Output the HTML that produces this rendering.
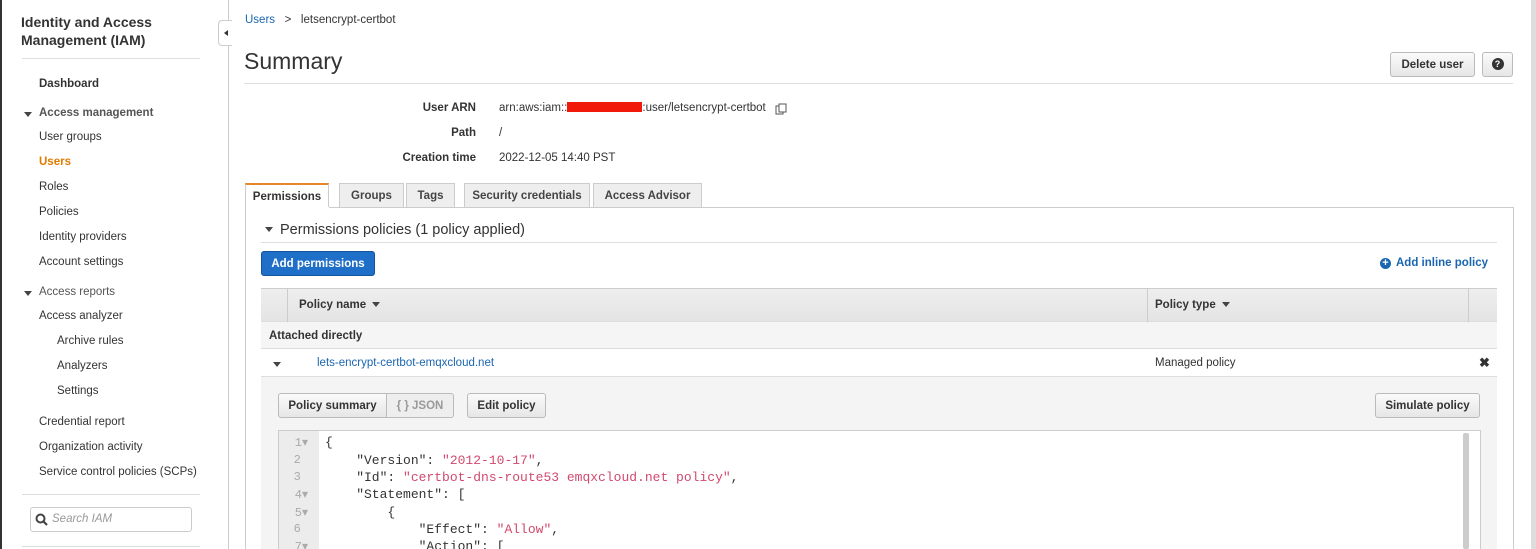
<!DOCTYPE html>
<html><head><meta charset="utf-8"><style>
*{box-sizing:border-box;margin:0;padding:0}
html,body{width:1536px;height:549px;overflow:hidden}
body{background:#fff;font-family:"Liberation Sans",Arial,sans-serif;font-size:12px;color:#333;position:relative}
.a{position:absolute;white-space:nowrap}
.b{font-weight:bold}
.nav{position:absolute;left:39px;font-size:11.5px;color:#333}
.btn{position:absolute;border:1px solid #bbb;border-radius:3px;background:linear-gradient(#fafafa,#e6e6e6);font-weight:bold;font-size:11.5px;color:#333;text-align:center;line-height:24px}
.tab{position:absolute;top:183px;height:24px;border:1px solid #ccc;border-bottom:none;background:#eee;font-weight:bold;font-size:11.5px;text-align:center;line-height:24px;color:#444}
.tri{display:inline-block;width:0;height:0;border-left:4px solid transparent;border-right:4px solid transparent;border-top:5px solid #444;vertical-align:middle}
.code{position:absolute;left:325px;font-family:"Liberation Mono",monospace;font-size:13px;color:#333;white-space:pre}
.ln{position:absolute;left:280px;width:28px;text-align:right;font-family:"Liberation Mono",monospace;font-size:12px;color:#aaa}
.s{color:#d14a6e}
</style></head><body>
<div class="a" style="left:0;top:0;width:2px;height:549px;background:#333"></div>
<div class="a" style="left:228px;top:0;width:1px;height:549px;background:#ccc"></div>
<div class="a" style="left:1531px;top:0;width:5px;height:549px;background:#ddd"></div>
<div class="a b" style="left:21px;top:13px;font-size:14px;line-height:18px;color:#333">Identity and Access<br>Management (IAM)</div>
<div class="a" style="left:22px;top:58px;width:178px;height:1px;background:#ddd"></div>
<div class="nav b" style="top:78px">Dashboard</div>
<div class="nav b" style="top:107px;color:#555"><span class="tri" style="position:absolute;left:-15px;top:5px"></span>Access management</div>
<div class="nav" style="top:131px">User groups</div>
<div class="nav b" style="top:156px;color:#e07b00">Users</div>
<div class="nav" style="top:181px">Roles</div>
<div class="nav" style="top:206px">Policies</div>
<div class="nav" style="top:231px">Identity providers</div>
<div class="nav" style="top:256px">Account settings</div>
<div class="nav" style="top:286px;color:#555"><span class="tri" style="position:absolute;left:-15px;top:5px"></span>Access reports</div>
<div class="nav" style="top:310px">Access analyzer</div>
<div class="nav" style="top:335px;left:57px">Archive rules</div>
<div class="nav" style="top:360px;left:57px">Analyzers</div>
<div class="nav" style="top:385px;left:57px">Settings</div>
<div class="nav" style="top:416px">Credential report</div>
<div class="nav" style="top:441px">Organization activity</div>
<div class="nav" style="top:466px">Service control policies (SCPs)</div>
<div class="a" style="left:22px;top:494px;width:178px;height:1px;background:#ddd"></div>
<div class="a" style="left:30px;top:507px;width:162px;height:25px;border:1px solid #ccc;border-radius:3px"></div>
<svg class="a" style="left:35px;top:513px" width="13" height="13" viewBox="0 0 13 13"><circle cx="5.5" cy="5.5" r="4" fill="none" stroke="#444" stroke-width="2"/><path d="M8.5 8.5L12 12" stroke="#444" stroke-width="2.2"/></svg>
<div class="a" style="left:52px;top:513px;font-size:11.5px;font-style:italic;color:#999">Search IAM</div>
<div class="a" style="left:22px;top:546px;width:178px;height:1px;background:#ddd"></div>
<div class="a" style="left:218px;top:20px;width:14px;height:26px;border:1px solid #ccc;border-right:none;border-radius:4px 0 0 4px;background:#fff"></div>
<div class="a" style="left:224px;top:30px;width:0;height:0;border-top:3.5px solid transparent;border-bottom:3.5px solid transparent;border-right:4px solid #333"></div>

<div class="a" style="left:245px;top:14px;font-size:11.5px"><span style="color:#1a66b0">Users</span>&nbsp;&nbsp;&nbsp;&gt;&nbsp;&nbsp;&nbsp;letsencrypt-certbot</div>
<div class="a" style="left:244px;top:48px;font-size:23px;color:#333">Summary</div>
<div class="a" style="left:244px;top:83px;width:1269px;height:1px;background:#ddd"></div>
<div class="btn" style="left:1390px;top:52px;width:85px;height:25px">Delete user</div>
<div class="btn" style="left:1482px;top:52px;width:31px;height:25px"><span style="display:inline-block;width:12px;height:12px;border-radius:50%;background:#333;color:#fff;font-size:9px;line-height:12px;vertical-align:middle;margin-top:-2px">?</span></div>

<div class="a b" style="left:376px;width:100px;text-align:right;top:102px;font-size:11.5px">User ARN</div>
<div class="a b" style="left:376px;width:100px;text-align:right;top:127px;font-size:11.5px">Path</div>
<div class="a b" style="left:376px;width:100px;text-align:right;top:152px;font-size:11.5px">Creation time</div>
<div class="a" style="left:499px;top:102px;font-size:11.5px">arn:aws:iam::<span style="display:inline-block;width:75px;height:10px;background:#f0190a;vertical-align:-1px"></span>:user/letsencrypt-certbot</div>
<svg class="a" style="left:775px;top:103px" width="13" height="13" viewBox="0 0 13 13"><rect x="1" y="3" width="7" height="8" fill="#fff" stroke="#555"/><rect x="4" y="1" width="7" height="8" fill="#fff" stroke="#555"/></svg>
<div class="a" style="left:499px;top:127px;font-size:11.5px">/</div>
<div class="a" style="left:499px;top:152px;font-size:11.5px">2022-12-05 14:40 PST</div>

<div class="tab" style="left:245px;width:84px;background:#fff;border-top:2px solid #e8862a;color:#333;height:25px">Permissions</div>
<div class="tab" style="left:339px;width:65px">Groups</div>
<div class="tab" style="left:406px;width:49px">Tags</div>
<div class="tab" style="left:464px;width:126px">Security credentials</div>
<div class="tab" style="left:593px;width:109px">Access Advisor</div>
<div class="a" style="left:245px;top:207px;width:1269px;height:350px;border:1px solid #ccc;border-bottom:none"></div>
<div class="a" style="left:330px;top:207px;width:1183px;height:1px;background:#ccc"></div>
<div class="a" style="left:246px;top:207px;width:83px;height:2px;background:#fff"></div>

<div class="a" style="left:265px;top:222px;font-size:14.5px;color:#333"><span class="tri" style="margin-right:7px;margin-top:-2px"></span>Permissions policies (1 policy applied)</div>
<div class="a" style="left:261px;top:242px;width:1236px;height:1px;background:#ddd"></div>
<div class="a b" style="left:261px;top:251px;width:114px;height:25px;background:#1f6fc8;border:1px solid #15539a;border-radius:3px;color:#fff;font-size:11.5px;text-align:center;line-height:24px">Add permissions</div>
<div class="a b" style="left:1380px;top:257px;font-size:11.5px;color:#1a66b0"><span style="display:inline-block;width:11px;height:11px;border-radius:50%;background:#1a66b0;color:#fff;font-size:11px;line-height:11px;text-align:center;vertical-align:0px;margin-right:5px">+</span>Add inline policy</div>

<div class="a" style="left:261px;top:288px;width:1236px;height:34px;background:linear-gradient(#eee,#e4e4e4);border-top:1px solid #ccc;border-bottom:1px solid #ddd"></div>
<div class="a" style="left:287px;top:288px;width:1px;height:34px;background:#ccc"></div>
<div class="a" style="left:1147px;top:288px;width:1px;height:34px;background:#ccc"></div>
<div class="a" style="left:1468px;top:288px;width:1px;height:34px;background:#ccc"></div>
<div class="a b" style="left:299px;top:299px;font-size:11.5px">Policy name <span class="tri" style="margin-left:3px"></span></div>
<div class="a b" style="left:1155px;top:299px;font-size:11.5px">Policy type <span class="tri" style="margin-left:3px"></span></div>
<div class="a" style="left:261px;top:322px;width:1236px;height:27px;background:#f5f5f5;border-bottom:1px solid #ddd"></div>
<div class="a b" style="left:269px;top:330px;font-size:11.5px">Attached directly</div>
<div class="a" style="left:261px;top:376px;width:1236px;height:1px;background:#ddd"></div>
<span class="tri a" style="left:273px;top:362px"></span>
<div class="a" style="left:317px;top:357px;font-size:11.5px;color:#1a66b0">lets-encrypt-certbot-emqxcloud.net</div>
<div class="a" style="left:1155px;top:357px;font-size:11.5px">Managed policy</div>
<div class="a b" style="left:1479px;top:355px;font-size:13px">✖</div>
<div class="a" style="left:261px;top:377px;width:1236px;height:172px;background:#f4f4f4"></div>

<div class="btn" style="left:278px;top:393px;width:109px;height:25px;border-radius:3px 0 0 3px">Policy summary</div>
<div class="btn" style="left:386px;top:393px;width:68px;height:25px;border-radius:0 3px 3px 0;background:#eee;color:#999">{ } JSON</div>
<div class="btn" style="left:467px;top:393px;width:79px;height:25px">Edit policy</div>
<div class="btn" style="left:1375px;top:393px;width:105px;height:25px">Simulate policy</div>

<div class="a" style="left:278px;top:430px;width:1203px;height:119px;background:#fff;border:1px solid #ccc;border-bottom:none"></div>
<div class="a" style="left:279px;top:431px;width:40px;height:118px;background:#ececec"></div>
<div class="a" style="left:1463px;top:433px;width:6px;height:116px;background:#ccc;border-radius:2px"></div>
<div class="ln" style="top:435px">1▾</div><div class="ln" style="top:453px">2&nbsp;</div><div class="ln" style="top:470px">3&nbsp;</div><div class="ln" style="top:487px">4▾</div><div class="ln" style="top:505px">5▾</div><div class="ln" style="top:522px">6&nbsp;</div><div class="ln" style="top:539px">7▾</div>
<div class="code" style="top:435px">{</div>
<div class="code" style="top:453px">    "Version": <span class="s">"2012-10-17"</span>,</div>
<div class="code" style="top:470px">    "Id": <span class="s">"certbot-dns-route53 emqxcloud.net policy"</span>,</div>
<div class="code" style="top:487px">    "Statement": [</div>
<div class="code" style="top:505px">        {</div>
<div class="code" style="top:522px">            "Effect": <span class="s">"Allow"</span>,</div>
<div class="code" style="top:539px">            "Action": [</div>
</body></html>
